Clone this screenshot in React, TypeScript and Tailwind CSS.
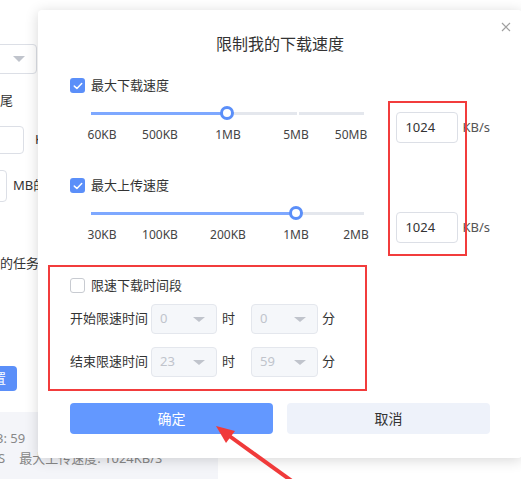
import React from "react";

function Check({ checked }: { checked: boolean }) {
  if (checked) {
    return (
      <div className="w-[15px] h-[15px] rounded-[3px] bg-[#5b8ff9] flex items-center justify-center shrink-0">
        <svg width="10" height="8" viewBox="0 0 10 8">
          <path d="M1.3 4.1 L3.9 6.5 L8.7 1.5" fill="none" stroke="#ffffff" strokeWidth="1.5" strokeLinecap="round" strokeLinejoin="round" />
        </svg>
      </div>
    );
  }
  return <div className="w-[15px] h-[15px] rounded-[3px] border border-[#c8cbd1] bg-white shrink-0" />;
}

function Slider({ pos, gap, marks }: { pos: number; gap?: number; marks: { l: number; t: string }[] }) {
  return (
    <div className="ml-[21px] w-[273px]">
      <div className="relative h-[14px] flex items-center mt-[13px]">
        <div className="flex w-full h-[3px]">
          <div className="h-full bg-[#7ea8ff]" style={{ width: pos }} />
          {gap ? (
            <>
              <div className="h-full bg-[#e4e7ed]" style={{ width: gap - pos }} />
              <div className="h-full w-[2px] bg-white" />
              <div className="h-full flex-1 bg-[#e4e7ed]" />
            </>
          ) : (
            <div className="h-full flex-1 bg-[#e4e7ed]" />
          )}
        </div>
        <div
          className="absolute top-0 w-[14px] h-[14px] rounded-full border-[3px] border-[#5b8ff9] bg-white"
          style={{ left: pos - 7 }}
        />
      </div>
      <div className="relative h-[16px] mt-[7px] text-[12px] leading-[16px] text-[#444]">
        {marks.map((m) => (
          <span key={m.t} className="absolute top-0 -translate-x-1/2 whitespace-nowrap" style={{ left: m.l }}>
            {m.t}
          </span>
        ))}
      </div>
    </div>
  );
}

function SpeedSection({ label, pos, gap, marks, className }: { label: string; pos: number; gap?: number; marks: { l: number; t: string }[]; className: string }) {
  return (
    <div className={"flex items-end " + className}>
      <div className="w-[327px] flex flex-col">
        <div className="flex items-center h-[15px]">
          <Check checked />
          <span className="ml-[6px] text-[13px] leading-[15px] text-[#333]">{label}</span>
        </div>
        <Slider pos={pos} gap={gap} marks={marks} />
      </div>
      <div className="flex items-center">
        <div className="w-[62px] h-[31px] rounded-[4px] border border-[#dcdfe6] flex items-center pl-[8px] text-[13px] text-[#333]">
          1024
        </div>
        <span className="ml-[4px] text-[13px] text-[#555]">KB/s</span>
      </div>
    </div>
  );
}

function Sel({ v, w }: { v: string; w: string }) {
  return (
    <div className={"h-[30px] rounded-[4px] border border-[#e4e7ed] bg-[#f5f7fa] flex items-center justify-between pl-[8px] pr-[11px] text-[13px] text-[#c0c4cc] " + w}>
      <span>{v}</span>
      <div className="w-0 h-0 border-x-[6px] border-x-transparent border-t-[5px] border-t-[#c0c4cc]" />
    </div>
  );
}

function TimeRow({ label, h, m, className }: { label: string; h: string; m: string; className: string }) {
  return (
    <div className={"flex items-center text-[13px] text-[#333] " + className}>
      <span className="w-[78px]">{label}</span>
      <div className="ml-[3px]">
        <Sel v={h} w="w-[66px]" />
      </div>
      <span className="ml-[5px]">时</span>
      <div className="ml-[16px]">
        <Sel v={m} w="w-[67px]" />
      </div>
      <span className="ml-[4px]">分</span>
    </div>
  );
}

export default function App() {
  return (
    <div className="relative w-[521px] h-[479px] overflow-hidden bg-white font-['Noto_Sans','Noto_Sans_CJK_SC',sans-serif]">
      {/* background page */}
      <div className="flex flex-col w-[218px] text-[13px] text-[#333]">
        <div className="mt-[44px] -ml-[80px] w-[117px] h-[30px] rounded-[4px] border border-[#dcdfe6] flex items-center justify-end pr-[11px]">
          <div className="w-0 h-0 border-x-[6px] border-x-transparent border-t-[6px] border-t-[#c0c4cc]" />
        </div>
        <div className="mt-[18px] leading-[16px]">尾</div>
        <div className="mt-[18px] flex items-center">
          <div className="-ml-[60px] w-[84px] h-[28px] rounded-[4px] border border-[#dcdfe6]" />
          <span className="ml-[11px]">KB</span>
        </div>
        <div className="mt-[16px] flex items-center">
          <div className="-ml-[60px] w-[67px] h-[32px] rounded-[4px] border border-[#dcdfe6]" />
          <span className="ml-[6px]">MB的</span>
        </div>
        <div className="mt-[53px] leading-[16px]">的任务</div>
        <div className="mt-[95px] -ml-[40px] w-[57px] h-[25px] rounded-[4px] bg-[#5b8ff9] text-white flex items-center justify-end pr-[11px]">
          设置
        </div>
        <div className="mt-[21px] h-[70px] bg-[#f4f5f9] pt-[17px] text-[#888] leading-[18px]">
          <div className="-ml-[4px]">3: 59</div>
          <div className="mt-[2px] whitespace-nowrap">
            <span className="-ml-[2px]">S</span>
            <span className="ml-[14px]">最大上传速度: 1024KB/S</span>
          </div>
        </div>
      </div>

      {/* dialog */}
      <div className="absolute top-[10px] left-[38px] w-[484px] h-[448px] bg-white rounded-[4px] shadow-[0_2px_14px_rgba(0,0,0,0.16)] flex flex-col px-[32px]">
        <svg className="absolute left-[463px] top-[12px]" width="10" height="10" viewBox="0 0 10 10">
          <path d="M1 1 L9 9 M9 1 L1 9" stroke="#a0a0a0" strokeWidth="1.2" />
        </svg>
        <div className="mt-[23px] h-[22px] text-center text-[16px] leading-[22px] text-[#333]">限制我的下载速度</div>
        <SpeedSection
          className="mt-[23px]"
          label="最大下载速度"
          pos={136}
          gap={206}
          marks={[
            { l: 11, t: "60KB" },
            { l: 69, t: "500KB" },
            { l: 137, t: "1MB" },
            { l: 205, t: "5MB" },
            { l: 260, t: "50MB" },
          ]}
        />
        <SpeedSection
          className="mt-[35px]"
          label="最大上传速度"
          pos={205}
          marks={[
            { l: 11, t: "30KB" },
            { l: 69, t: "100KB" },
            { l: 137, t: "200KB" },
            { l: 205, t: "1MB" },
            { l: 265, t: "2MB" },
          ]}
        />
        <div className="mt-[35px] flex items-center h-[15px]">
          <Check checked={false} />
          <span className="ml-[6px] text-[13px] leading-[15px] text-[#333]">限速下载时间段</span>
        </div>
        <TimeRow className="mt-[11px]" label="开始限速时间" h="0" m="0" />
        <TimeRow className="mt-[13px]" label="结束限速时间" h="23" m="59" />
        <div className="mt-[26px] flex gap-[14px]">
          <div className="w-[203px] h-[31px] rounded-[4px] bg-[#6398ff] text-white text-[14px] flex items-center justify-center">确定</div>
          <div className="w-[203px] h-[31px] rounded-[4px] bg-[#eef2fa] text-[#333] text-[14px] flex items-center justify-center">取消</div>
        </div>
      </div>

      {/* annotations */}
      <div className="absolute left-[388px] top-[101px] w-[79px] h-[155px] border-2 border-[#f23c3c]" />
      <div className="absolute left-[48px] top-[265px] w-[319px] h-[126px] border-2 border-[#f23c3c]" />
      <svg className="absolute left-0 top-0 pointer-events-none" width="521" height="479" viewBox="0 0 521 479">
        <line x1="296" y1="484" x2="228" y2="435" stroke="#f03a3a" strokeWidth="4" />
        <polygon points="216,426 235,431 226,443" fill="#f03a3a" />
      </svg>
    </div>
  );
}
